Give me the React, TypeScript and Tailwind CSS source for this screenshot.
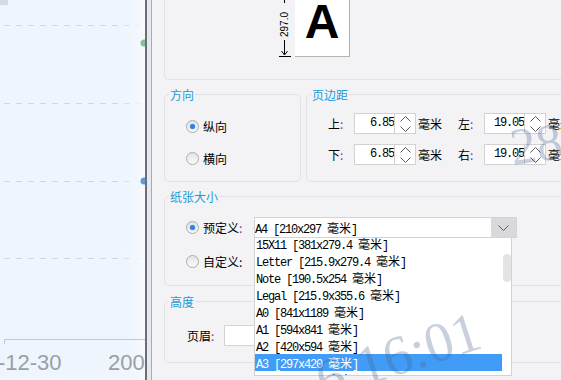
import React from 'react';

const MONO = "font-['Liberation_Mono','Noto_Sans_CJK_SC',monospace] tracking-[-1.2px]";

const SIZES = [
  { name: '15X11', dims: '381x279.4' },
  { name: 'Letter', dims: '215.9x279.4' },
  { name: 'Note', dims: '190.5x254' },
  { name: 'Legal', dims: '215.9x355.6' },
  { name: 'A0', dims: '841x1189' },
  { name: 'A1', dims: '594x841' },
  { name: 'A2', dims: '420x594' },
  { name: 'A3', dims: '297x420' },
  { name: 'A4', dims: '210x297' },
];

function SizeText({ name, dims }: { name: string; dims: string }) {
  return (
    <span className={MONO}>
      {name} [{dims} <span className="tracking-normal">毫米</span>]
    </span>
  );
}

function Chevron({ up }: { up?: boolean }) {
  return (
    <svg width="11" height="6" viewBox="0 0 11 6" className="text-[#5c5c5c]">
      <path d={up ? 'M0.5 5.5 L5.5 0.5 L10.5 5.5' : 'M0.5 0.5 L5.5 5.5 L10.5 0.5'} fill="none" stroke="currentColor" />
    </svg>
  );
}

function RadioDot({ checked }: { checked?: boolean }) {
  return (
    <span className="flex h-[13px] w-[13px] shrink-0 items-center justify-center rounded-full border border-[#ababab] bg-gradient-to-b from-[#e4e4e4] to-[#fbfbfb]">
      {checked && <span className="h-[5px] w-[5px] rounded-full bg-[#2f7fe8] shadow-[0_0_2px_#7fb0f0]" />}
    </span>
  );
}

function Radio({ checked, label }: { checked?: boolean; label: string }) {
  return (
    <div className="flex h-[21px] items-center gap-[4px]">
      <RadioDot checked={checked} />
      <span>{label}</span>
    </div>
  );
}

function Label({ text, w }: { text: string; w: string }) {
  return (
    <span className={`shrink-0 ${w}`}>
      {text}
      <span className="text-[#7d3b86]">:</span>
    </span>
  );
}

function SpinBox({ value }: { value: string }) {
  return (
    <div className="flex h-[21px] shrink-0 border border-[#d2d2d2] bg-white">
      <div className={`w-[39px] text-right leading-[19px] ${MONO}`}>{value}</div>
      <div className="flex w-[21px] flex-col items-center justify-center gap-[4px] border-l border-[#d2d2d2]">
        <Chevron up />
        <Chevron />
      </div>
    </div>
  );
}

function MarginRow({ a, av, b, bv }: { a: string; av: string; b: string; bv: string }) {
  return (
    <div className="flex h-[21px] items-center">
      <Label text={a} w="w-[26px]" />
      <SpinBox value={av} />
      <span className="ml-[2px] shrink-0">毫米</span>
      <span className="w-[16px] shrink-0" />
      <Label text={b} w="w-[26px]" />
      <SpinBox value={bv} />
      <span className="ml-[2px] shrink-0">毫米</span>
    </div>
  );
}

function Legend({ children }: { children: React.ReactNode }) {
  return <legend className="ml-[4px] px-[1px] leading-[13px] text-[#1d9ad8]">{children}</legend>;
}

function Chart() {
  return (
    <div className="relative h-[380px] w-[145px] shrink-0 bg-[#eef5fd]">
      <svg width="145" height="380" className="block">
        <defs>
          <linearGradient id="edge" x1="0" x2="1">
            <stop offset="0" stopColor="#eef5fd" stopOpacity="0" />
            <stop offset="1" stopColor="#f8fafd" stopOpacity="1" />
          </linearGradient>
        </defs>
        <rect x="0" y="0" width="8" height="5" fill="#c9ced6" opacity="0.7" />
        {[25.5, 103.5, 181.5, 258.5].map((y) => (
          <line key={y} x1="4" x2="145" y1={y} y2={y} stroke="#d2d6dc" strokeDasharray="6 6" />
        ))}
        <rect x="118" y="0" width="27" height="380" fill="url(#edge)" />
        <circle cx="144" cy="43" r="3.5" fill="#5fb57c" opacity="0.8" />
        <circle cx="144" cy="181" r="3.5" fill="#4b8fd6" opacity="0.9" />
        <line x1="4" x2="145" y1="339.5" y2="339.5" stroke="#c5c9cf" />
        <line x1="4.5" x2="4.5" y1="339" y2="344" stroke="#c5c9cf" />
        <text x="-2" y="370" fontSize="22" fill="#9a9fa6" fontFamily="Liberation Sans, sans-serif">-12-30</text>
        <text x="108" y="370" fontSize="22" fill="#9a9fa6" fontFamily="Liberation Sans, sans-serif">200</text>
      </svg>
    </div>
  );
}

function PaperPreview() {
  return (
    <div className="flex items-start gap-[4px]">
      <svg width="12" height="57" className="block">
        <line x1="5.5" x2="5.5" y1="0" y2="3" stroke="#000" />
        <text
          x="0"
          y="0"
          transform="translate(9 37) rotate(-90)"
          fontSize="10"
          fontFamily="Liberation Sans, sans-serif"
          fill="#000"
        >
          297.0
        </text>
        <line x1="5.5" x2="5.5" y1="40" y2="55" stroke="#000" />
        <path d="M2.5 51 L5.5 55 L8.5 51" fill="none" stroke="#000" />
        <line x1="0" x2="12" y1="56.5" y2="56.5" stroke="#000" />
      </svg>
      <div className="flex h-[57px] w-[55px] justify-center border-r border-b border-[#b3b3b3] bg-white">
        <span className="-mt-[2px] font-['Liberation_Sans',sans-serif] text-[48px] leading-[48px] font-bold">A</span>
      </div>
    </div>
  );
}

function Dialog() {
  return (
    <div className="flex w-[460px] shrink-0 flex-col pl-[12px]">
      <div className="-mt-[12px] flex h-[92px] shrink-0 rounded-[5px] border border-[#e1e1e6] pt-[11px] pl-[114px]">
        <PaperPreview />
      </div>

      <div className="mt-[8px] flex shrink-0 gap-[5px]">
        <fieldset className="h-[94px] w-[137px] shrink-0 rounded-[5px] border border-[#e1e1e6]">
          <Legend>方向</Legend>
          <div className="flex flex-col gap-[11px] pt-[15px] pl-[21px]">
            <Radio checked label="纵向" />
            <Radio label="横向" />
          </div>
        </fieldset>
        <fieldset className="h-[94px] flex-1 rounded-[5px] border border-[#e1e1e6]">
          <Legend>页边距</Legend>
          <div className="flex flex-col gap-[10px] pt-[12px] pl-[21px]">
            <MarginRow a="上" av="6.85" b="左" bv="19.05" />
            <MarginRow a="下" av="6.85" b="右" bv="19.05" />
          </div>
        </fieldset>
      </div>

      <fieldset className="mt-[8px] h-[96px] shrink-0 rounded-[5px] border border-[#e1e1e6]">
        <Legend>纸张大小</Legend>
        <div className="flex flex-col gap-[13px] pt-[14px] pl-[21px]">
          <div className="flex items-center">
            <div className="w-[17px] shrink-0">
              <RadioDot checked />
            </div>
            <Label text="预定义" w="w-[51px]" />
            <div className="relative z-10">
              <div className="flex h-[21px] w-[263px] border border-[#d4d4d8] bg-white">
                <div className="flex-1 leading-[19px]">
                  <SizeText name="A4" dims="210x297" />
                </div>
                <div className="flex w-[25px] items-center justify-center bg-[#d9d9dd]">
                  <Chevron />
                </div>
              </div>
              <div className="absolute top-full left-0 flex h-[138px] w-[258px] overflow-hidden border-x border-b border-[#d2d2d2] bg-white">
                <div className="-mt-[3px] flex w-[247px] shrink-0 flex-col">
                  {SIZES.map((s) => (
                    <div
                      key={s.name}
                      className={`h-[17px] shrink-0 pl-[1px] leading-[17px] ${
                        s.name === 'A3' ? 'bg-[#409cf6] text-white' : 'text-black'
                      }`}
                    >
                      <SizeText name={s.name} dims={s.dims} />
                    </div>
                  ))}
                </div>
                <div className="flex flex-1 justify-center pt-[16px]">
                  <div className="h-[28px] w-[8px] rounded-[4px] bg-[#e4e4e4]" />
                </div>
              </div>
            </div>
          </div>
          <Radio label="自定义:" />
        </div>
      </fieldset>

      <fieldset className="mt-[9px] h-[68px] shrink-0 rounded-[5px] border border-[#e1e1e6]">
        <Legend>高度</Legend>
        <div className="flex items-center pt-[17px] pl-[22px]">
          <Label text="页眉" w="w-[37px]" />
          <div className="h-[21px] w-[120px] border border-[#d4d4d8] bg-white" />
        </div>
      </fieldset>
    </div>
  );
}

export default function App() {
  return (
    <div className="relative flex h-[380px] w-[561px] overflow-hidden bg-[#f3f3f5] font-['Noto_Sans_CJK_SC',sans-serif] text-[12px] text-black">
      <Chart />
      <div className="w-[2px] shrink-0 bg-[#6b6f74]" />
      <div className="w-[4px] shrink-0 bg-[#e6e9ef]" />
      <div className="w-[1px] shrink-0 bg-[#a3acbb]" />
      <Dialog />

      <span className="pointer-events-none absolute top-[122px] left-[514px] z-20 origin-bottom-left -rotate-[8deg] font-['Liberation_Serif',serif] text-[52px] leading-[52px] text-[#4d6590]/30">
        28
      </span>
      <span className="pointer-events-none absolute top-[352px] left-[326px] z-20 origin-bottom-left -rotate-[18deg] font-['Liberation_Serif',serif] text-[56px] leading-[56px] whitespace-pre text-[#4d6590]/30">
        6 16:01
      </span>
    </div>
  );
}
